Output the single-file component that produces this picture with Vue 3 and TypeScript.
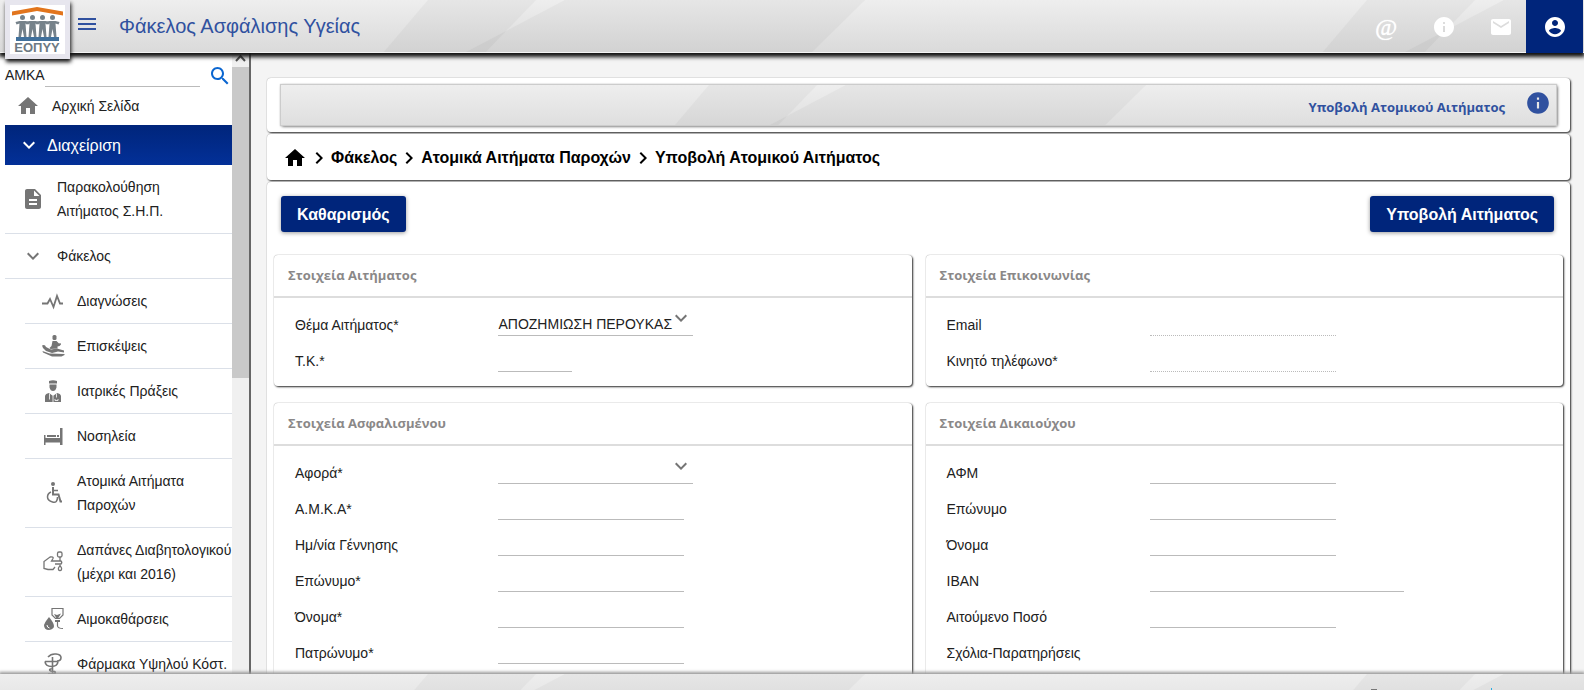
<script setup lang="ts">
import { ref } from 'vue'

interface MenuItem {
  icon: string
  lines: string[]
}

interface Field {
  id: string
  label: string
  size?: string
  disabled?: boolean
  options?: string[]
}

interface Panel {
  title: string
  fields: Field[]
}

const subItems: MenuItem[] = [
  { icon: 'pulse', lines: ['Διαγνώσεις'] },
  { icon: 'visit', lines: ['Επισκέψεις'] },
  { icon: 'doctor', lines: ['Ιατρικές Πράξεις'] },
  { icon: 'bed', lines: ['Νοσηλεία'] },
  { icon: 'wheelchair', lines: ['Ατομικά Αιτήματα', 'Παροχών'] },
  { icon: 'hand', lines: ['Δαπάνες Διαβητολογικού', '(μέχρι και 2016)'] },
  { icon: 'blood', lines: ['Αιμοκαθάρσεις'] },
  { icon: 'pharmacy', lines: ['Φάρμακα Υψηλού Κόστ.'] },
]

const columns: Panel[][] = [
  [
    {
      title: 'Στοιχεία Αιτήματος',
      fields: [
        { id: 'subject', label: 'Θέμα Αιτήματος*', options: ['ΑΠΟΖΗΜΙΩΣΗ ΠΕΡΟΥΚΑΣ'] },
        { id: 'postcode', label: 'Τ.Κ.*', size: 'short' },
      ],
    },
    {
      title: 'Στοιχεία Ασφαλισμένου',
      fields: [
        { id: 'concerns', label: 'Αφορά*', options: [''] },
        { id: 'ins-amka', label: 'Α.Μ.Κ.Α*' },
        { id: 'ins-birth', label: 'Ημ/νία Γέννησης' },
        { id: 'ins-surname', label: 'Επώνυμο*' },
        { id: 'ins-name', label: 'Όνομα*' },
        { id: 'ins-father', label: 'Πατρώνυμο*' },
      ],
    },
  ],
  [
    {
      title: 'Στοιχεία Επικοινωνίας',
      fields: [
        { id: 'email', label: 'Email', disabled: true },
        { id: 'mobile', label: 'Κινητό τηλέφωνο*', disabled: true },
      ],
    },
    {
      title: 'Στοιχεία Δικαιούχου',
      fields: [
        { id: 'afm', label: 'ΑΦΜ' },
        { id: 'ben-surname', label: 'Επώνυμο' },
        { id: 'ben-name', label: 'Όνομα' },
        { id: 'iban', label: 'IBAN', size: 'long' },
        { id: 'amount', label: 'Αιτούμενο Ποσό' },
        { id: 'notes', label: 'Σχόλια-Παρατηρήσεις', size: 'area' },
      ],
    },
  ],
]

const crumbs = ['Φάκελος', 'Ατομικά Αιτήματα Παροχών', 'Υποβολή Ατομικού Αιτήματος']
const amka = ref('')
</script>

<template>
  <div class="app">
    <header class="topbar facets">
      <a class="logo" href="#" aria-label="ΕΟΠΥΥ">
        <svg width="55" height="49" viewBox="0 0 55 49">
          <rect width="55" height="49" fill="#fff" />
          <path d="M2 6.500 L27 2 L53 6.500 V10.500 L27 6 L2 10.500Z" fill="#e2751d" />
          <g fill="#76828a">
            <g v-for="n in 4" :key="n" :transform="`translate(${n * 10 + 2.5} 0)`">
              <circle cx="0" cy="12.500" r="2.500" />
              <path d="M-3 16 H3 L7 17 L6 19.500 L3 18.500 L4 32 H1.500 L0 24 L-1.500 32 H-4 L-3 18.500 L-6 19.500 L-7 17Z" />
            </g>
          </g>
          <rect x="6" y="32" width="43" height="4" fill="#41719c" />
          <text x="27" y="47" text-anchor="middle" class="logo-text">ΕΟΠΥΥ</text>
        </svg>
      </a>
      <button class="icon-btn burger" aria-label="Μενού">
        <svg width="18" height="12" viewBox="0 0 18 12"><path d="M0 0h18v2H0zM0 5h18v2H0zM0 10h18v2H0z" fill="#30519f" /></svg>
      </button>
      <h1>Φάκελος Ασφάλισης Υγείας</h1>
      <nav class="tools">
        <button class="icon-btn at" aria-label="Επικοινωνία">@</button>
        <button class="icon-btn" aria-label="Πληροφορίες">
          <svg width="24" height="24" viewBox="0 0 24 24"><path fill="#fff" d="M12 2C6.480 2 2 6.480 2 12s4.480 10 10 10 10-4.480 10-10S17.520 2 12 2zm1 15h-2v-6h2v6zm0-8h-2V7h2v2z" /></svg>
        </button>
        <button class="icon-btn" aria-label="Μηνύματα">
          <svg width="24" height="24" viewBox="0 0 24 24"><path fill="#fff" d="M20 4H4c-1.100 0-2 .9-2 2v12c0 1.100.9 2 2 2h16c1.100 0 2-.9 2-2V6c0-1.100-.9-2-2-2zm0 4l-8 5-8-5V6l8 5 8-5v2z" /></svg>
        </button>
        <button class="icon-btn user" aria-label="Χρήστης">
          <svg width="24" height="24" viewBox="0 0 24 24"><path fill="#fff" d="M12 2C6.480 2 2 6.480 2 12s4.480 10 10 10 10-4.480 10-10S17.520 2 12 2zm0 3c1.660 0 3 1.340 3 3s-1.340 3-3 3-3-1.340-3-3 1.340-3 3-3zm0 14.200c-2.500 0-4.710-1.280-6-3.220.03-1.990 4-3.080 6-3.080 1.990 0 5.970 1.090 6 3.080-1.290 1.940-3.500 3.220-6 3.220z" /></svg>
        </button>
      </nav>
    </header>

    <div class="body">
      <aside class="sidebar">
        <div class="menu">
          <form class="search" @submit.prevent>
            <label for="amka">ΑΜΚΑ</label>
            <input id="amka" v-model="amka" class="line" type="text" />
            <button class="icon-btn" aria-label="Αναζήτηση">
              <svg width="24" height="24" viewBox="0 0 24 24"><path fill="#0b66d0" d="M15.500 14h-.79l-.28-.27C15.410 12.590 16 11.110 16 9.500 16 5.910 13.090 3 9.500 3S3 5.910 3 9.500 5.910 16 9.500 16c1.610 0 3.090-.59 4.230-1.570l.27.28v.79l5 4.990L20.490 19l-4.990-5zm-6 0C7.010 14 5 11.990 5 9.500S7.010 5 9.500 5 14 7.010 14 9.500 11.990 14 9.500 14z" /></svg>
            </button>
          </form>
          <a class="home" href="#">
            <svg width="24" height="24" viewBox="0 0 24 24"><path fill="#757575" d="M10 20v-6h4v6h5v-8h3L12 3 2 12h3v8z" /></svg>
            <span>Αρχική Σελίδα</span>
          </a>
          <a class="section" href="#">
            <svg width="24" height="24" viewBox="0 0 24 24"><path fill="#fff" d="M7.410 8.590L12 13.170l4.590-4.580L18 10l-6 6-6-6z" /></svg>
            <span>Διαχείριση</span>
          </a>
          <a class="item" href="#">
            <svg width="24" height="24" viewBox="0 0 24 24"><path fill="#757575" d="M14 2H6c-1.100 0-2 .9-2 2v16c0 1.100.9 2 2 2h12c1.100 0 2-.9 2-2V8l-6-6zm2 16H8v-2h8v2zm0-4H8v-2h8v2zm-3-5V3.500L18.500 9H13z" /></svg>
            <span>Παρακολούθηση<br />Αιτήματος Σ.Η.Π.</span>
          </a>
          <a class="item" href="#">
            <svg width="24" height="24" viewBox="0 0 24 24"><path fill="#757575" d="M7.410 8.590L12 13.170l4.590-4.580L18 10l-6 6-6-6z" /></svg>
            <span>Φάκελος</span>
          </a>
          <a v-for="item in subItems" :key="item.icon" class="item sub" href="#">
            <svg width="24" height="24" viewBox="0 0 24 24" fill="#757575" stroke="none">
              <path v-if="item.icon === 'pulse'" d="M1 14.500h5.500L9 10l3.500 8L16 7l3 7.500h3" fill="none" stroke="#757575" stroke-width="1.800" />
              <g v-else-if="item.icon === 'visit'">
                <rect x="11.500" y="1" width="4" height="5" rx="1.500" />
                <path d="M11.500 7h4l2.500 2.500 1.500-.5.500 1.500-1.500 1.500-2 .5v2l-7 .5-1-1 2-2z" />
                <path d="M1 11.500q3-1.500 4 1.500l5 2.500 6-1 7 2v2l-6-1-6 1.500-6-2-3-3z" />
                <path d="M1.500 17l7 2.500 15 .5v1l-3 1.500H11l-9-4z" />
              </g>
              <g v-else-if="item.icon === 'doctor'">
                <path d="M8 2q4-1.500 8 0v2.500H8zM8.500 5.500h7v3q-1 3.500-3.500 3.500T8.500 8.500z" />
                <path d="M4 23v-6q.5-2.500 4-3l4 3 4-3q3.500.5 4 3v6z" />
                <path d="M8.500 14.500v6M15.500 14.500v4M12 17v6M14 20v1.500h3V20" stroke="#fff" fill="none" stroke-width=".8" />
              </g>
              <g v-else-if="item.icon === 'bed'">
                <path d="M3 11h1.500v5H19V4h2.500v17H19v-2.500H4.500V21H3zM4 14h16v3H4z" />
                <path d="M6 11h9v2H6zM16 11h2v2h-2z" />
              </g>
              <g v-else-if="item.icon === 'wheelchair'">
                <circle cx="12" cy="3" r="2" />
                <path d="M12 6v7.500h5.500l2 7h1.500" fill="none" stroke="#757575" stroke-width="2" />
                <path d="M12 9.500h5M10 11q-3.500 1.500-3.500 5t5 5 5-5" fill="none" stroke="#757575" stroke-width="1.500" />
              </g>
              <g v-else-if="item.icon === 'hand'" fill="none" stroke="#757575" stroke-width="1.300">
                <path d="M14 17l-2 2.500H7L3 18.500v-7L9 7q4-.5 3 1.500L10.500 11H20q1.500 1.500 0 3h-6" />
                <rect x="16.500" y="2" width="4.500" height="5" rx="1.500" />
                <path d="M19 7v4M19 15.500l-1.500 2.500q-.5 2.500 1.500 2.500t1.500-2.500z" />
              </g>
              <g v-else-if="item.icon === 'blood'">
                <path d="M8 10q5 6 5 9t-5 4q-5 0-5-5 1-3 5-8z" />
                <path d="M6 18q0 2.500 2.500 3" fill="none" stroke="#fff" />
                <path d="M11 1.500h11V8l-3.500 3.500h-4L11 8z" fill="none" stroke="#757575" stroke-width="1.200" />
                <path d="M13 7l3 1 4-1.500-3 5h-1.500zM14 13h5v2h-5z" />
                <path d="M16.500 14v5q.5 2.500 5.500 2.500" fill="none" stroke="#757575" stroke-width="1.200" />
              </g>
              <g v-else fill="none" stroke="#757575" stroke-width="1.600">
                <path d="M4 9.500h13q-.5 5-6.500 5t-6.500-5M7 5q3-3.500 8-3t5 3.500q0 3.500-4 3.500M11.500 5v17M12 16.500q-5 .5-2.500 2.500l4 .5q2 1.500-1 2.500H7" />
              </g>
            </svg>
            <span><template v-for="(line, i) in item.lines" :key="line"><br v-if="i" />{{ line }}</template></span>
          </a>
        </div>
        <div class="scrollbar" aria-hidden="true">
          <svg width="17" height="14" viewBox="0 0 17 14"><path d="M4 8l4.500-5 4.500 5" fill="none" stroke="#505050" stroke-width="2" /></svg>
          <div class="thumb"></div>
        </div>
      </aside>

      <main>
        <section class="card head-card">
          <div class="banner facets">
            <h2>Υποβολή Ατομικού Αιτήματος</h2>
            <button class="icon-btn" aria-label="Βοήθεια">
              <svg width="26" height="26" viewBox="0 0 24 24"><path fill="#30519f" d="M12 2C6.480 2 2 6.480 2 12s4.480 10 10 10 10-4.480 10-10S17.520 2 12 2zm1 15h-2v-6h2v6zm0-8h-2V7h2v2z" /></svg>
            </button>
          </div>
        </section>
        <nav class="card crumbs">
          <a href="#" aria-label="Αρχική"><svg width="24" height="24" viewBox="0 0 24 24"><path d="M10 20v-6h4v6h5v-8h3L12 3 2 12h3v8z" /></svg></a>
          <template v-for="crumb in crumbs" :key="crumb">
            <svg width="24" height="24" viewBox="0 0 24 24"><path d="M10 6L8.590 7.410 13.170 12l-4.580 4.590L10 18l6-6z" /></svg>
            <a href="#">{{ crumb }}</a>
          </template>
        </nav>
        <section class="card form-card">
          <div class="actions">
            <button class="primary">Καθαρισμός</button>
            <button class="primary">Υποβολή Αιτήματος</button>
          </div>
          <div class="columns">
            <div v-for="(column, c) in columns" :key="c" class="column">
              <section v-for="panel in column" :key="panel.title" class="card panel">
                <h3>{{ panel.title }}</h3>
                <div class="fields">
                  <div v-for="field in panel.fields" :key="field.id" class="field">
                    <label :for="field.id">{{ field.label }}</label>
                    <div v-if="field.options" class="select">
                      <select :id="field.id" class="line">
                        <option v-for="option in field.options" :key="option">{{ option }}</option>
                      </select>
                      <svg width="24" height="24" viewBox="0 0 24 24"><path fill="#757575" d="M7.410 8.590L12 13.170l4.590-4.580L18 10l-6 6-6-6z" /></svg>
                    </div>
                    <textarea v-else-if="field.size === 'area'" :id="field.id" class="area"></textarea>
                    <input v-else :id="field.id" class="line" :class="field.size" type="text" :disabled="field.disabled" />
                  </div>
                </div>
              </section>
            </div>
          </div>
        </section>
      </main>
    </div>

    <footer class="facets">
      <svg width="124" height="16" viewBox="0 0 124 16" aria-hidden="true">
        <path d="M0 15h6v1H0z" fill="#777" />
        <path d="M120 14h1v2h-1z" fill="#29abe2" />
      </svg>
    </footer>
  </div>
</template>

<style>
body {
  margin: 0;
  overflow: hidden;
}
</style>

<style scoped>
* {
  box-sizing: border-box;
}

.app {
  height: 100vh;
  display: flex;
  flex-direction: column;
  background: #f4f4f4;
  color: #212121;
  font: 14px/24px "Liberation Sans", Arial, sans-serif;
}

a {
  color: inherit;
  text-decoration: none;
}

h1, h2, h3 {
  margin: 0;
}

svg {
  display: block;
  flex: none;
}

.icon-btn {
  display: flex;
  align-items: center;
  justify-content: center;
  padding: 0;
  border: 0;
  background: none;
  cursor: pointer;
}

.facets {
  background: url("data:image/svg+xml,%3Csvg xmlns='http://www.w3.org/2000/svg' width='939' height='60'%3E%3ClinearGradient id='g' x2='0' y2='1'%3E%3Cstop stop-color='%23eeeeee'/%3E%3Cstop offset='1' stop-color='%23d7d7d7'/%3E%3C/linearGradient%3E%3Crect width='939' height='60' fill='url(%23g)'/%3E%3Cg fill='%23000' fill-opacity='.035'%3E%3Cpath d='M428 0H536L478 60H377z'/%3E%3Cpath d='M565 0H865L804 60H451z'/%3E%3C/g%3E%3C/svg%3E") repeat-x;
}

.topbar {
  position: relative;
  z-index: 2;
  display: flex;
  align-items: center;
  height: 53px;
  padding-left: 5px;
  border-bottom: 1px solid #f4f4f4;
  box-shadow: 0 3px 4px 1px #111;
}

.logo {
  align-self: flex-start;
  flex: none;
  height: 59px;
  padding: 5px;
  background: #e7e6ee;
  box-shadow: 1px 3px 4px #111;
}

.logo-text {
  font: bold 13px "Liberation Sans", Arial, sans-serif;
  fill: #6d7a83;
}

.burger {
  margin: 0 23px 4px 8px;
}

h1 {
  color: #30519f;
  font-size: 20px;
  font-weight: 400;
}

.tools {
  display: flex;
  align-items: center;
  gap: 33px;
  height: 53px;
  margin: 0 1px -1px auto;
}

.at {
  padding-right: 2px;
  color: #fff;
  font: italic 24px/24px "Liberation Serif", serif;
  text-shadow: 0 0 1px #fff;
}

.user {
  width: 57px;
  height: 53px;
  margin-left: -20px;
  background: #00257b;
}

.body {
  flex: 1;
  min-height: 0;
  display: flex;
}

.sidebar {
  flex: none;
  display: flex;
  width: 251px;
  overflow: hidden;
  background: #fff;
  border-right: 2px solid #666;
}

.menu {
  flex: 1;
  min-width: 0;
  padding: 8px 0 0 5px;
  overflow: hidden;
  white-space: nowrap;
}

.search {
  display: flex;
  align-items: center;
  height: 28px;
}

.search .icon-btn {
  padding-top: 2px;
}

.line {
  height: 24px;
  padding: 0;
  border: 0;
  border-bottom: 1px solid #bbb;
  border-radius: 0;
  background: none;
  color: inherit;
  font: inherit;
}

.search .line {
  flex: 1;
  min-width: 0;
  margin-right: 8px;
}

.home {
  display: flex;
  align-items: center;
  gap: 12px;
  height: 34px;
  margin-bottom: 2px;
  padding-left: 11px;
}

.section {
  display: flex;
  align-items: center;
  gap: 6px;
  height: 40px;
  padding-left: 12px;
  background: linear-gradient(#00257b, #033098);
  color: #fff;
  font-size: 16px;
}

.section span {
  padding-top: 2px;
}

.item {
  display: flex;
  align-items: center;
  gap: 12px;
  padding: 10px 0 10px 16px;
  border-bottom: 1px solid #dbe0e8;
}

.sub {
  margin-left: 20px;
}

.scrollbar {
  flex: none;
  width: 17px;
  background: #f0f0f0;
}

.thumb {
  height: 50%;
  background: #c9c9c9;
}

main {
  flex: 1;
  min-width: 0;
  padding: 25px 14px 0 16px;
  overflow: hidden;
}

.card {
  border-radius: 4px;
  background: #fff;
  box-shadow: 0 0 1px #999, 1px 1px 2px #222;
}

.head-card {
  padding: 7px 14px;
}

.banner {
  display: flex;
  align-items: center;
  justify-content: flex-end;
  gap: 20px;
  height: 40px;
  padding-right: 5px;
  box-shadow: 0 0 1px 1px #ccc, 1px 1px 3px #111;
}

h2 {
  padding-top: 4px;
  color: #30519f;
  font: bold 13px/24px "Open Sans", sans-serif;
}

.banner .icon-btn {
  margin-bottom: 4px;
}

.crumbs {
  display: flex;
  align-items: center;
  height: 46px;
  margin-top: 2px;
  padding: 1px 0 0 16px;
  color: #000;
  font-size: 16px;
  font-weight: 700;
}

.form-card {
  margin-top: 2px;
  padding: 14px 7px;
}

.actions {
  display: flex;
  justify-content: space-between;
  padding: 0 9px 0 7px;
}

.primary {
  height: 36px;
  padding: 2px 16px 0;
  border: 0;
  border-radius: 3px;
  background: #00257b;
  box-shadow: 0 1px 4px #999;
  color: #fff;
  font: bold 16px/24px "Liberation Sans", Arial, sans-serif;
  cursor: pointer;
}

.columns {
  display: grid;
  grid-template-columns: 1fr 1fr;
  gap: 14px;
  margin-top: 23px;
}

.column {
  display: flex;
  flex-direction: column;
  gap: 17px;
}

h3 {
  padding: 8px 14px 9px;
  border-bottom: 2px solid #ddd;
  color: #8a8888;
  font: bold 13px/24px "Open Sans", sans-serif;
}

.fields {
  padding: 2px 21px 14px;
}

.field {
  display: grid;
  grid-template-columns: 34% 1fr;
  column-gap: 1px;
  align-items: end;
  min-height: 36px;
}

.field label {
  padding-top: 14px;
  line-height: 22px;
  align-self: start;
}

.field .line {
  width: 186px;
}

.field .short {
  width: 74px;
}

.field .long {
  width: 254px;
}

.field .line:disabled {
  border-bottom-style: dotted;
}

.area {
  height: 60px;
  margin-top: 52px;
  border: 1px solid #bbb;
}

.select {
  display: flex;
  width: 195px;
}

.select svg {
  margin: -6px 0 0 -24px;
  pointer-events: none;
}

.select .line {
  width: 100%;
  appearance: none;
}

footer {
  position: relative;
  z-index: 2;
  display: flex;
  justify-content: flex-end;
  height: 16px;
  padding-right: 89px;
  overflow: hidden;
  box-shadow: 0 -1px 3px 1px #999;
}
</style>
